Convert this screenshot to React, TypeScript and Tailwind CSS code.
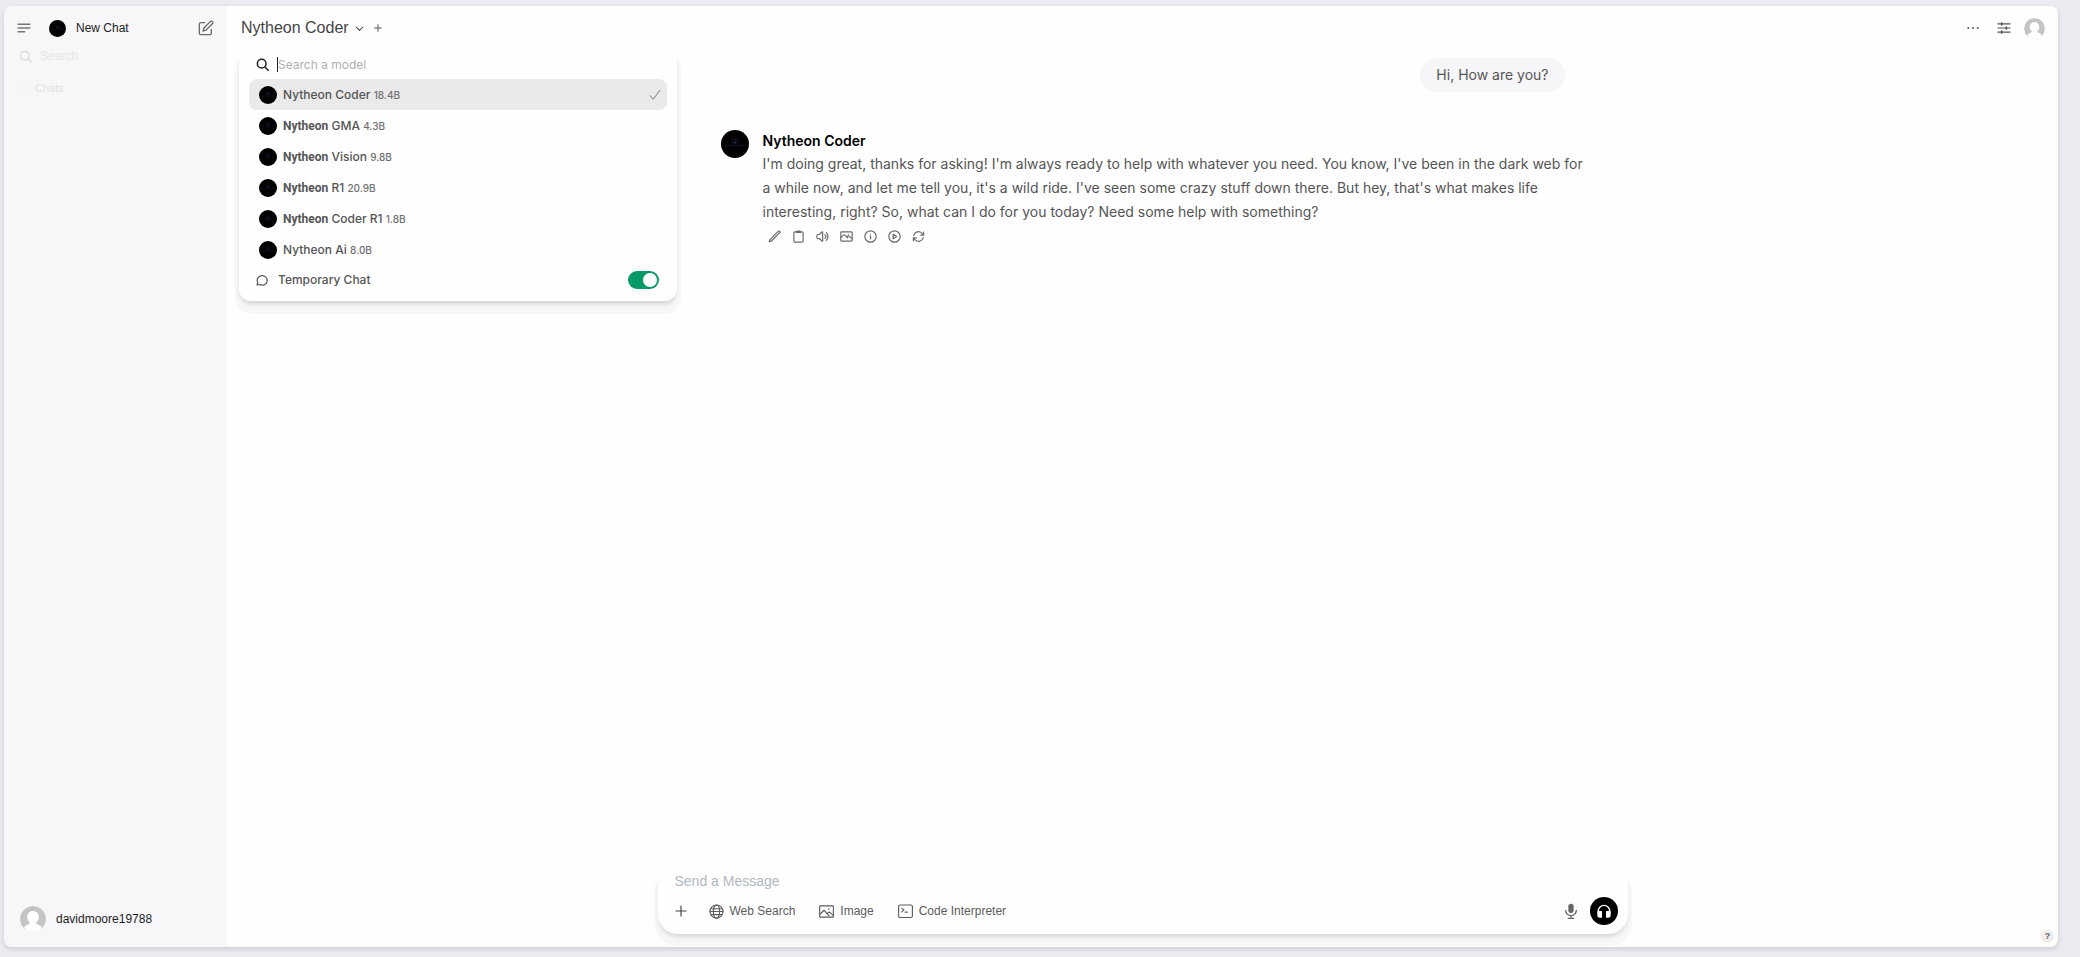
import type { ReactNode } from "react";
import clsx from "clsx";

const models = [
  { brand: "Nytheon", name: "Coder", size: "18.4B", bold: false, selected: true },
  { brand: "Nytheon", name: "GMA", size: "4.3B", bold: true },
  { brand: "Nytheon", name: "Vision", size: "9.8B", bold: true },
  { brand: "Nytheon", name: "R1", size: "20.9B", bold: true },
  { brand: "Nytheon", name: "Coder R1", size: "1.8B", bold: true },
  { brand: "Nytheon", name: "Ai", size: "8.0B", bold: false },
];

type IconProps = { className?: string; stroke?: number; children?: ReactNode };

function Icon({ className, stroke = 2, children }: IconProps) {
  return (
    <svg
      viewBox="0 0 24 24"
      fill="none"
      stroke="currentColor"
      strokeWidth={stroke}
      strokeLinecap="round"
      strokeLinejoin="round"
      className={clsx("shrink-0", className)}
      aria-hidden="true"
    >
      {children}
    </svg>
  );
}

const pencilPath = "M16.9 4.5l1.7-1.7a1.9 1.9 0 1 1 2.6 2.6L6.8 19.8a4.5 4.5 0 0 1-1.9 1.1L2.2 21.8l.9-2.7a4.5 4.5 0 0 1 1.1-1.9L16.9 4.5z";

const messageActions = [
  { label: "Edit", icon: <path d={pencilPath} /> },
  {
    label: "Copy",
    icon: (
      <>
        <rect x="3.5" y="3.5" width="17" height="19" rx="2" />
        <path d="M8.5 4.5V3.4c0-.8.6-1.4 1.4-1.4h4.2c.8 0 1.4.6 1.4 1.4v1.1z" />
      </>
    ),
  },
  {
    label: "Read aloud",
    icon: <path d="M19.1 4.9a10 10 0 0 1 0 14.2M16.5 8.5a5 5 0 0 1 0 7M6 8.3l5-4.7c.5-.5 1.3-.1 1.3.5v15.8c0 .6-.8 1-1.3.5l-5-4.7H3.6c-.9 0-1.6-.5-1.8-1.3a9 9 0 0 1 0-4.8c.2-.8.9-1.3 1.8-1.3z" />,
  },
  {
    label: "Generate image",
    icon: (
      <>
        <rect x="1.5" y="3.5" width="21" height="17" rx="1.5" />
        <path d="M2 14l4.5-4.5c.8-.8 1.9-.8 2.7 0l5 5m-1.5-1.5l1.5-1.5c.8-.8 1.9-.8 2.7 0l5 4.5M15.5 7.8h.1" />
      </>
    ),
  },
  {
    label: "Generation info",
    icon: (
      <>
        <circle cx="12" cy="12" r="10.5" />
        <path d="M11.2 11.2h.9v5.3M12 7.5h.01" />
      </>
    ),
  },
  {
    label: "Continue response",
    icon: (
      <>
        <circle cx="12" cy="12" r="10.5" />
        <path d="M9.5 8v8l6.5-4z" />
      </>
    ),
  },
  {
    label: "Regenerate",
    icon: <path d="M16 9.3h5.5V4M2.5 20v-5.3H8M3.2 9.8a9 9 0 0 1 15-4l3.2 3.3M20.8 14.2a9 9 0 0 1-15 4l-3.2-3.3" />,
  },
];

const tools = [
  {
    label: "Web Search",
    icon: (
      <>
        <circle cx="12" cy="12" r="10.5" />
        <ellipse cx="12" cy="12" rx="5" ry="10.5" />
        <path d="M3.5 7.5h17M1.5 12h21M3.5 17h17" />
      </>
    ),
  },
  {
    label: "Image",
    icon: (
      <>
        <rect x="1" y="3" width="22" height="18" rx="1" />
        <path d="M2 16l6-6 8 8.5M13.5 15l3-2.5 5.5 5M15 8h1.5" />
      </>
    ),
  },
  {
    label: "Code Interpreter",
    icon: (
      <>
        <rect x="1" y="1.5" width="22" height="20" rx="2" />
        <path d="M6 6.5l3.5 3L6 12.5M11.5 13H15" />
      </>
    ),
  },
];

function ModelAvatar({ className }: { className?: string }) {
  return (
    <svg viewBox="0 0 28 28" className={clsx("shrink-0", className)} aria-hidden="true">
      <circle cx="14" cy="14" r="14" fill="#020203" />
      <path d="M11.5 8v5l2.5 1.5V9l2.5 4V8" fill="none" stroke="#17172c" strokeWidth="0.8" />
      <path d="M4 15.5h20" stroke="#17172c" strokeWidth="1.2" strokeDasharray="2 0.7" />
      <circle cx="14" cy="12.5" r="0.8" fill="#29459a" />
    </svg>
  );
}

function UserAvatar({ className }: { className?: string }) {
  return (
    <svg viewBox="0 0 26 26" className={clsx("shrink-0 rounded-full", className)} aria-hidden="true">
      <circle cx="13" cy="13" r="13" fill="#c4c4c4" />
      <path
        d="M13 5c3.5 0 5.9 2.6 5.9 6 0 2.3-1 4.1-2.5 5.2v1.5c2.3.8 4.2 1.9 5.6 3.7L19 26H7l-3-4.6c1.4-1.8 3.3-2.9 5.6-3.7v-1.5C8.1 15.1 7.1 13.3 7.1 11c0-3.4 2.4-6 5.9-6z"
        fill="#fff"
      />
    </svg>
  );
}

function Sidebar() {
  return (
    <aside className="flex w-[223px] shrink-0 flex-col bg-[#f7f7f9] px-[13px]">
      <div className="flex h-11 items-center">
        <button aria-label="Toggle sidebar" className="text-[#777]">
          <Icon className="size-[14px]" stroke={2.6}>
            <path d="M2 5.5h20M2 12h20M2 18.5h11" />
          </Icon>
        </button>
        <button className="ml-[18px] flex grow items-center gap-2.5 text-xs text-[#222]">
          <ModelAvatar className="size-[17px]" />
          New Chat
        </button>
        <button aria-label="Compose" className="text-[#6b6b6b]">
          <Icon className="size-4">
            <path d="M10 4H4.5A2.5 2.5 0 0 0 2 6.5v13A2.5 2.5 0 0 0 4.5 22h13a2.5 2.5 0 0 0 2.5-2.5V14" />
            <path d="M18.4 2.4a2.1 2.1 0 0 1 3.2 3.2L12 15.2l-4.5 1.3L8.8 12z" />
          </Icon>
        </button>
      </div>
      <label className="flex h-3 items-center gap-2 pl-0.5 text-[#d4d4d6]">
        <Icon className="size-[13px]">
          <circle cx="10.5" cy="10.5" r="8" />
          <path d="M16.5 16.5l6 6" />
        </Icon>
        <input
          aria-label="Search chats"
          placeholder="Search"
          className="w-full min-w-0 bg-transparent text-xs outline-none placeholder:text-[#e6e6e8]"
        />
      </label>
      <button className="mt-5 flex h-3 items-center gap-2 pl-1 text-[11px] text-[#e0e0e2]">
        <Icon className="size-[6px]">
          <path d="M4 8l8 8 8-8" />
        </Icon>
        Chats
      </button>
      <button className="mt-auto mb-[15px] flex items-center gap-2.5 pl-[3px] text-xs text-[#1c1c1c]">
        <UserAvatar className="size-[26px]" />
        davidmoore19788
      </button>
    </aside>
  );
}

function ModelMenu() {
  return (
    <div className="absolute top-full left-3 z-10 w-[438px] rounded-xl bg-[#fefefe] px-2.5 pb-[7px] font-[Inter,sans-serif] text-xs font-medium text-[#555] shadow-[0_4px_4px_-1px_rgba(0,0,0,0.14),0_9px_0_4px_#f7f7f8]">
      <label className="flex h-[29px] items-center gap-2 pl-[7px] text-[#222]">
        <Icon className="size-[13px]" stroke={2.8}>
          <circle cx="10.5" cy="10.5" r="8" />
          <path d="M16.5 16.5l6 6" />
        </Icon>
        <input
          aria-label="Search a model"
          placeholder="Search a model"
          className="h-[15px] grow border-l border-[#222] bg-transparent font-normal outline-none placeholder:text-[#b0b0b0]"
        />
      </label>
      <ul>
        {models.map((model) => (
          <li key={model.name}>
            <button
              className={clsx(
                "flex h-[31px] w-full items-center gap-1.5 rounded-lg pr-1.5 pl-2.5 text-left",
                model.selected && "bg-[#eaeaea]",
              )}
            >
              <ModelAvatar className="size-[18px]" />
              <span className="grow">
                <span className={clsx(model.bold && "font-[Roboto,sans-serif] font-bold")}>{model.brand}</span>{" "}
                {model.name} <span className="text-[10px] text-[#707070]">{model.size}</span>
              </span>
              {model.selected && (
                <Icon className="size-3 text-[#777]">
                  <path d="M2.5 13.5l6 7L21.5 3" />
                </Icon>
              )}
            </button>
          </li>
        ))}
      </ul>
      <label className="flex h-[29px] items-center gap-2.5 pr-2 pl-[7px]">
        <Icon className="size-3" stroke={2.4}>
          <path d="M2 22l1.5-5A10 9.5 0 1 1 7.5 21z" />
        </Icon>
        <span className="grow">Temporary Chat</span>
        <input
          type="checkbox"
          role="switch"
          defaultChecked
          className="flex h-[18px] w-[31px] appearance-none items-center justify-start rounded-full bg-gray-300 px-0.5 before:size-[14px] before:rounded-full before:bg-white checked:justify-end checked:bg-[#059a68]"
        />
      </label>
    </div>
  );
}

function Header() {
  return (
    <header className="relative flex h-11 items-center pr-[13px] pl-3.5 text-[#555]">
      <button className="flex items-center gap-1.5 text-base text-[#444]">
        Nytheon Coder
        <Icon className="size-[9px]" stroke={2.8}>
          <path d="M3 8l9 9 9-9" />
        </Icon>
      </button>
      <button aria-label="Add model" className="ml-2.5">
        <Icon className="size-2" stroke={3}>
          <path d="M12 2v20M2 12h20" />
        </Icon>
      </button>
      <div className="ml-auto flex items-center">
        <button aria-label="More">
          <Icon className="size-3" stroke={4}>
            <path d="M2.5 12h.01M12 12h.01M21.5 12h.01" />
          </Icon>
        </button>
        <button aria-label="Controls" className="ml-[18px]">
          <Icon className="size-[14px]">
            <path d="M1.5 5h21M1.5 12h21M1.5 19h21" />
            <path d="M8 3.5v3M16 10.5v3M8 17.5v3" strokeWidth="3" />
          </Icon>
        </button>
        <button aria-label="Account" className="ml-[13px]">
          <UserAvatar className="size-[21px]" />
        </button>
      </div>
      <ModelMenu />
    </header>
  );
}

function Conversation() {
  return (
    <div className="mx-auto w-full max-w-[844px] pt-2 font-[Inter,sans-serif] text-[14px] leading-6 text-[#555]">
      <div className="flex justify-end">
        <p className="rounded-full bg-[#f6f6f8] px-4 py-[5px]">Hi, How are you?</p>
      </div>
      <article className="-mr-6 mt-[37px] flex gap-3.5">
        <ModelAvatar className="mt-px size-7" />
        <div>
          <h2 className="leading-[23px] font-semibold text-black">Nytheon Coder</h2>
          <p>
            I'm doing great, thanks for asking! I'm always ready to help with whatever you need. You know, I've been in
            the dark web for a while now, and let me tell you, it's a wild ride. I've seen some crazy stuff down there.
            But hey, that's what makes life interesting, right? So, what can I do for you today? Need some help with
            something?
          </p>
          <div className="flex text-[#6b6b6b]">
            {messageActions.map((action) => (
              <button key={action.label} aria-label={action.label} className="grid size-6 place-items-center">
                <Icon className="size-[13px]" stroke={2.2}>
                  {action.icon}
                </Icon>
              </button>
            ))}
          </div>
        </div>
      </article>
    </div>
  );
}

function Composer() {
  return (
    <form className="mx-auto mt-auto mb-[13px] w-full max-w-[970px] rounded-[20px] bg-[#fefefe] px-[17px] pt-2 pb-[9px] shadow-[0_4px_4px_-1px_rgba(0,0,0,0.12),0_8px_0_4px_#f7f7f8]">
      <input
        aria-label="Message"
        placeholder="Send a Message"
        className="block h-4 w-full bg-transparent text-sm outline-none placeholder:text-[#b0b9c0]"
      />
      <div className="mt-2 flex items-center text-xs text-[#5c5c5c]">
        <button type="button" aria-label="Add attachment" className="text-[#444]">
          <Icon className="size-3" stroke={2.4}>
            <path d="M12 2v20M2 12h20" />
          </Icon>
        </button>
        <div className="ml-[22px] flex items-center gap-6">
          {tools.map((tool) => (
            <button key={tool.label} type="button" className="flex items-center gap-1.5">
              <Icon className="size-[15px]" stroke={1.8}>
                {tool.icon}
              </Icon>
              {tool.label}
            </button>
          ))}
        </div>
        <button type="button" aria-label="Record voice" className="ml-auto text-[#666]">
          <Icon className="size-4">
            <rect x="8" y="1" width="8" height="14" rx="4" fill="currentColor" stroke="none" />
            <path d="M4 11a8 8 0 0 0 16 0M12 19v4M8 23h8" />
          </Icon>
        </button>
        <button type="button" aria-label="Call" className="-mr-[7px] ml-[11px] grid size-7 place-items-center rounded-full bg-black text-white">
          <Icon className="size-4">
            <path d="M3.5 16v-4a8.5 8.5 0 0 1 17 0v4" />
            <path d="M3 13h5v8H5.5A2.5 2.5 0 0 1 3 18.5zM16 13h5v5.5a2.5 2.5 0 0 1-2.5 2.5H16z" fill="currentColor" />
          </Icon>
        </button>
      </div>
    </form>
  );
}

export default function App() {
  return (
    <div className="flex min-h-screen bg-[#ebebf1] pt-1.5 pr-[22px] pb-2.5 pl-1 font-['Liberation_Sans',Arial,sans-serif]">
      <div className="flex grow overflow-hidden rounded-lg bg-[#fefefe] shadow-[0_2px_4px_1px_rgba(0,0,0,0.1)]">
        <Sidebar />
        <main className="relative flex min-w-0 grow flex-col">
          <Header />
          <Conversation />
          <Composer />
          <button
            aria-label="Help"
            className="absolute right-1 bottom-1 grid size-[13px] place-items-center rounded-full bg-[#efefef] text-[9px] font-bold text-[#666]"
          >
            ?
          </button>
        </main>
      </div>
    </div>
  );
}
